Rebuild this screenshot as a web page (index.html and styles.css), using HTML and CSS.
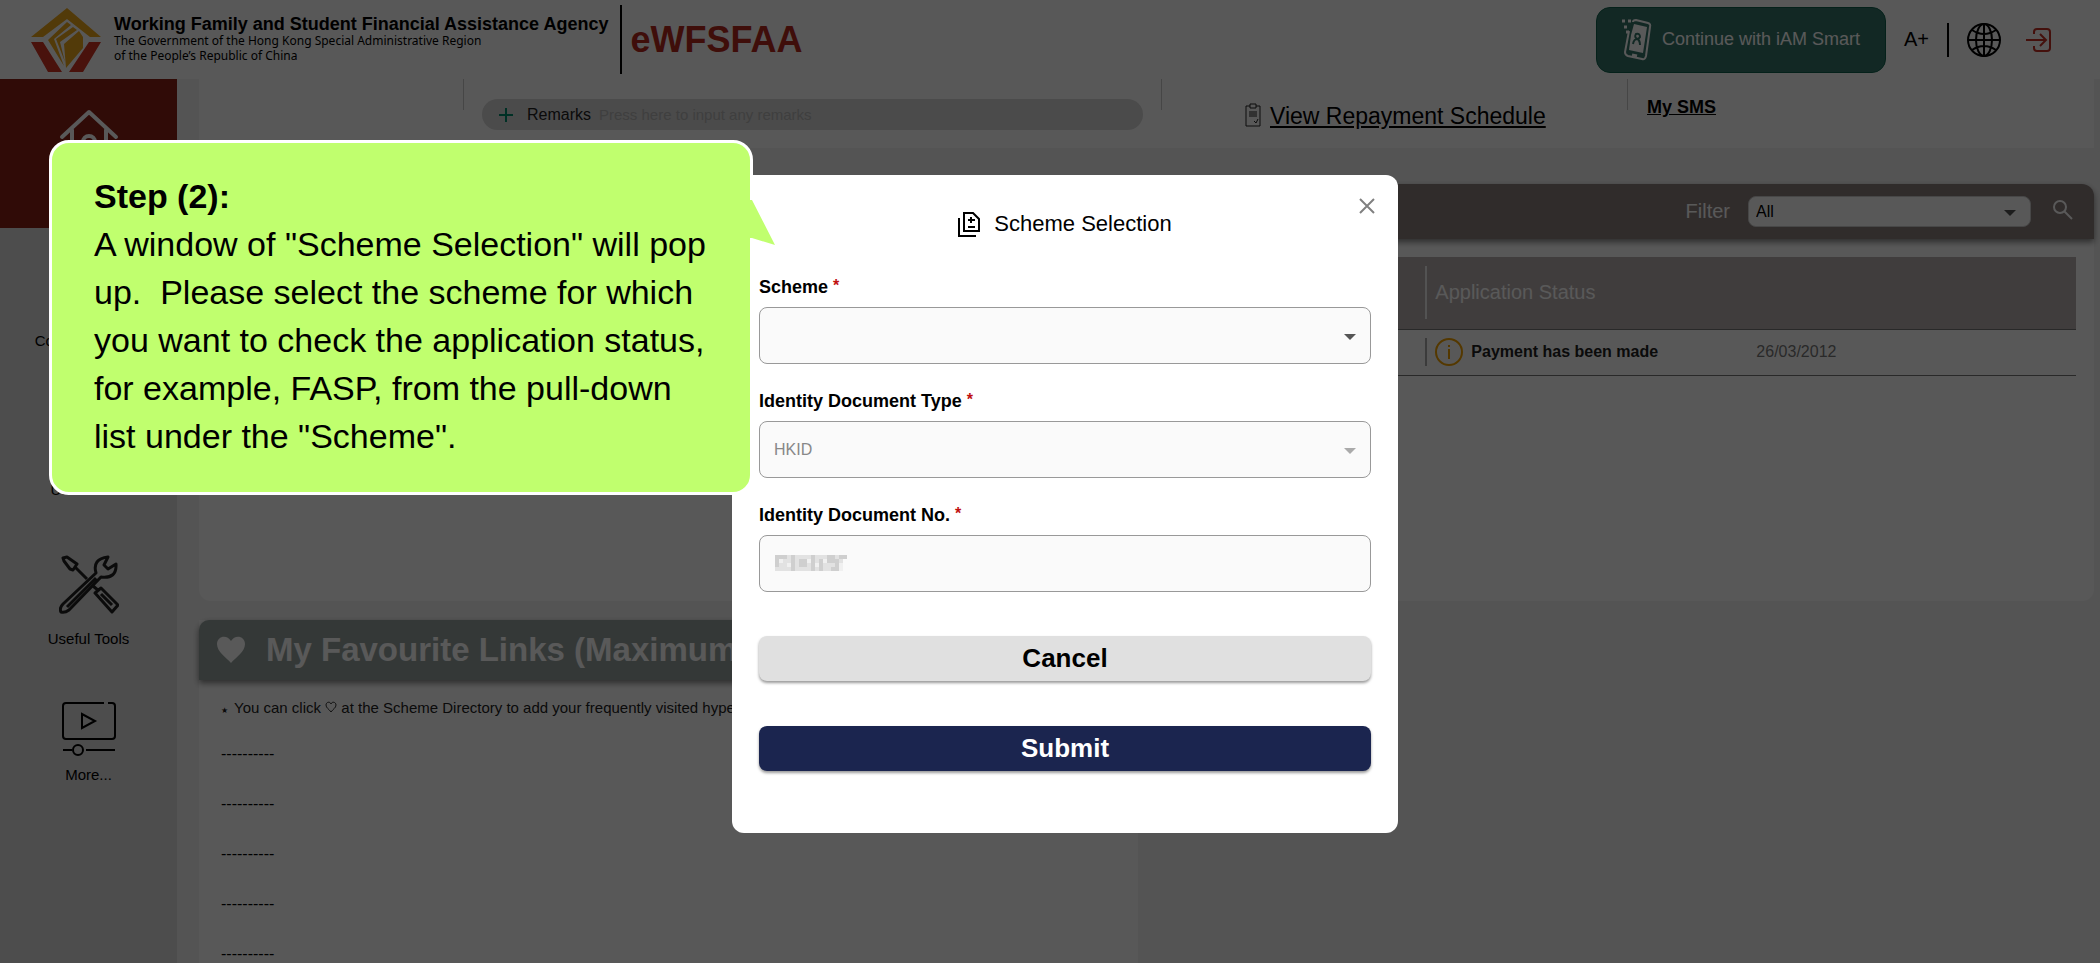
FILE: index.html
```html
<!DOCTYPE html>
<html lang="en">
<head>
  <meta charset="UTF-8">
  <meta name="viewport" content="width=device-width, initial-scale=1.0">
  <title>eWFSFAA</title>
  <link rel="stylesheet" href="styles.css">
</head>
<body>
  <div class="page">
    <header class="header">
      <svg class="logo" viewBox="0 0 72 64">
        <path fill="#eca51c" d="M37 0 L71 29 H60 L37 11 L13 29 H1 Z"/>
        <path fill="#d03424" d="M1 34 H13 L32 64 H18 Z M71 34 H59 L39 64 H53 Z"/>
        <path fill="#eca51c" d="M37 14 L41 17 L24 31 L34 58 L18 32 Z M43 19 L47 22 L30 34 L35 54 L26 31 Z M49 23 L53 29 V40 L36 60 L34 36 Z"/>
      </svg>
      <div class="agency">
        <strong>Working Family and Student Financial Assistance Agency</strong>
        <span>The Government of the Hong Kong Special Administrative Region</span>
        <span>of the People’s Republic of China</span>
      </div>
      <h1 class="brand">eWFSFAA</h1>

      <div class="header-tools">
        <button class="iam-button" type="button">
          <svg width="30" height="42" viewBox="0 0 30 42" fill="none" stroke="#fff" stroke-width="2">
            <path d="M11 3 Q11 1 14 1 L26 4 Q29 5 28 8 L24 37 Q23 41 20 40 L6 37 Q3 36 3 33 L7 12"/>
            <path fill="#fff" stroke="none" d="M12 5 L25 8 L21 34 L7 31 L9 16 Z"/>
            <path stroke="#357469" d="M11 25 Q12 20 15 20 Q18 21 18 26 M15 20 Q12 18 14 15 Q18 14 18 18 Q17 20 15 20"/>
            <path stroke-width="3" d="M0 2 H3 M6 2 H9 M2 8 H5 M4 13 H7 M10 36 L15 37"/>
          </svg>
          Continue with iAM Smart
        </button>
        <button class="plain size-button" type="button">A+</button>
        <button class="plain" type="button" aria-label="Language">
          <svg width="34" height="34" viewBox="0 0 34 34" fill="none" stroke="#000" stroke-width="2">
            <circle cx="17" cy="17" r="16"/>
            <ellipse cx="17" cy="17" rx="8" ry="16"/>
            <path d="M17 1 V33 M1 17 H33 M5 7 Q17 15 29 7 M5 27 Q17 19 29 27"/>
          </svg>
        </button>
        <button class="plain" type="button" aria-label="Logout">
          <svg width="26" height="24" viewBox="0 0 26 24" fill="none" stroke="#c43024" stroke-width="2">
            <path d="M8 6 V4 Q8 1 11 1 H21 Q24 1 24 4 V20 Q24 23 21 23 H11 Q8 23 8 20 V18 M0 12 H19 M14 6 L20 12 L14 18"/>
          </svg>
        </button>
      </div>
    </header>

    <div class="body">
      <nav class="sidebar">
        <a class="side-item home" href="#" aria-label="Home">
          <svg width="60" height="60" viewBox="0 0 60 60" fill="none" stroke="#fff" stroke-width="4" stroke-linecap="round" stroke-linejoin="round">
            <path d="M3 29 L30 4 L57 29 M13 22 V55 H47 V22"/>
            <circle cx="30" cy="34" r="6"/>
          </svg>
        </a>
        <a class="side-item" href="#">
          <svg width="60" height="60" viewBox="0 0 60 60" fill="none" stroke="#222" stroke-width="3"><path d="M12 3 H48 V57 H12 Z M20 18 H40 M20 30 H40"/></svg>
          Common Forms
        </a>
        <a class="side-item" href="#">
          <svg width="60" height="60" viewBox="0 0 60 60" fill="none" stroke="#222" stroke-width="3"><circle cx="30" cy="30" r="26"/><path d="M30 26 V44 M30 16 V20"/></svg>
          User Guide
        </a>
        <a class="side-item" href="#">
          <svg width="60" height="60" viewBox="0 0 60 60" fill="none" stroke="#222" stroke-width="3" stroke-linejoin="round">
            <path d="M4 3 L8 2 L18 9 L14 15 L11 14 L5 6 Z M16 12 L28 24 M34 31 L40 36 M36 38 L42 33 L59 50 L53 57 Z M42 39 L53 50"/>
            <path d="M37 18 Q33 4 49 2 L45 10 L49 14 L57 9 Q58 24 42 22 L10 55 Q6 58 2 57 Q0 53 4 49 Z M8 52 L37 23"/>
          </svg>
          Useful Tools
        </a>
        <a class="side-item more" href="#">
          <svg width="54" height="54" viewBox="0 0 54 54" fill="none" stroke="#000" stroke-width="2">
            <path d="M42 1 H4 Q1 1 1 4 V34 Q1 37 4 37 H50 Q53 37 53 34 V4 Q53 1 50 1 H46 M20 12 V26 L33 19 Z M1 48 H10 M24 48 H53"/>
            <circle cx="16" cy="48" r="5"/>
          </svg>
          More...
        </a>
      </nav>

      <main class="content">
        <section class="summary">
          <div class="cell"></div>
          <div class="cell remarks-cell">
            <div class="remarks">
              <svg width="14" height="14" viewBox="0 0 14 14" stroke="#008a6a" stroke-width="2"><path d="M7 0 V14 M0 7 H14"/></svg>
              <label for="remarks">Remarks</label>
              <input type="text" id="remarks" placeholder="Press here to input any remarks">
            </div>
          </div>
          <div class="cell repay-cell">
            <svg width="16" height="24" viewBox="0 0 16 24" fill="none" stroke="#222"><path d="M5 3 H1 V23 H15 V3 H11 M5 1 H11 V5 H5 Z M4 9 H12 M4 11 H12 M4 13 H12 M9 18 L11 20 L13 16"/></svg>
            <a href="#">View Repayment Schedule</a>
          </div>
          <div class="cell sms-cell"><a href="#">My SMS</a></div>
        </section>

        <section class="applications">
          <div class="bar">
            <label for="filter">Filter</label>
            <div class="select-wrap">
              <select id="filter"><option>All</option></select>
            </div>
            <button class="plain search" type="button" aria-label="Search">
              <svg width="22" height="26" viewBox="0 0 22 26" fill="none" stroke="#fff" stroke-width="2"><circle cx="8" cy="8" r="6"/><path d="M12 12 L20 20"/></svg>
            </button>
          </div>
          <table>
            <colgroup>
              <col class="col-scheme">
              <col class="col-status">
              <col>
            </colgroup>
            <thead>
              <tr>
                <th></th>
                <th colspan="2"><div class="divided">Application Status</div></th>
              </tr>
            </thead>
            <tbody>
              <tr>
                <td></td>
                <td>
                  <div class="divided">
                    <svg width="28" height="28" viewBox="0 0 28 28" fill="none" stroke="#f0a000" stroke-width="2"><circle cx="14" cy="14" r="13"/><path d="M14 11 V21 M14 7 V9"/></svg>
                    <strong>Payment has been made</strong>
                  </div>
                </td>
                <td class="date">26/03/2012</td>
              </tr>
            </tbody>
          </table>
        </section>

        <section class="favourites">
          <h2>
            <svg width="30" height="28" viewBox="0 0 30 28"><path fill="#fff" d="M15 27 C10 21 1 16 1 8 C1 0 11 -2 15 5 C19 -2 29 0 29 8 C29 16 20 21 15 27 Z"/></svg>
            My Favourite Links (Maximum
          </h2>
          <p class="note"><span class="star">★</span>You can click
            <svg width="12" height="12" viewBox="0 0 12 12"><path fill="none" stroke="#333" d="M6 11 C4 8 1 7 1 4 C1 1 5 0 6 3 C7 0 11 1 11 4 C11 7 8 8 6 11 Z"/></svg>
            at the Scheme Directory to add your frequently visited hyperlinks</p>
          <ul>
            <li>----------</li>
            <li>----------</li>
            <li>----------</li>
            <li>----------</li>
            <li>----------</li>
          </ul>
        </section>
      </main>
    </div>
  </div>

  <div class="overlay">
    <form class="modal">
      <button class="plain close" type="button" aria-label="Close">
        <svg width="16" height="16" viewBox="0 0 16 16" stroke="#808080" stroke-width="2"><path d="M1 1 L15 15 M15 1 L1 15"/></svg>
      </button>
      <h2 class="modal-title">
        <svg width="22" height="26" viewBox="0 0 22 26" fill="none" stroke="#000" stroke-width="2">
          <path d="M6 2 H15 L21 8 V20 H6 Z M1 7 V25 H18 M10 9 H17 M13 6 V12 M10 16 H17"/>
        </svg>
        Scheme Selection
      </h2>

      <div class="field">
        <label for="scheme">Scheme <sup>*</sup></label>
        <div class="select-wrap">
          <select id="scheme"><option></option></select>
        </div>
      </div>

      <div class="field">
        <label for="docType">Identity Document Type <sup>*</sup></label>
        <div class="select-wrap disabled">
          <select id="docType" disabled><option>HKID</option></select>
        </div>
      </div>

      <div class="field">
        <label for="docNo">Identity Document No. <sup>*</sup></label>
        <div class="masked">
          <input type="text" id="docNo" disabled>
          <svg width="72" height="16" viewBox="0 0 72 16" shape-rendering="crispEdges">
            <path fill="#e2e2e2" d="M0 0 H68 V16 H0 Z"/>
            <path fill="#cfcfcf" d="M0 0 H12 V4 H4 V12 H0 Z M16 0 H20 V16 H16 Z M24 4 H32 V12 H24 Z M36 0 H40 V16 H36 Z M44 4 H48 V16 H44 Z M52 0 H60 V8 H52 Z M60 4 H64 V16 H56 V12 H60 Z M64 0 H72 V4 H64 Z"/>
            <path fill="#f0f0f0" d="M4 4 H8 V8 H4 Z M12 8 H16 V12 H12 Z M32 4 H36 V8 H32 Z M40 8 H44 V12 H40 Z M48 4 H52 V8 H48 Z M64 8 H68 V16 H64 Z"/>
          </svg>
        </div>
      </div>

      <div class="actions">
        <button class="cancel" type="button">Cancel</button>
        <button class="submit" type="button">Submit</button>
      </div>
    </form>

    <div class="callout">
      <strong>Step (2):</strong>
      <p>A window of "Scheme Selection" will pop up.&nbsp; Please select the scheme for which you want to check the application status, for example, FASP, from the pull-down list under the "Scheme".</p>
      <svg class="tail" width="26" height="46" viewBox="0 0 26 46"><path fill="#c0ff6e" d="M0 0 H3 L26 45 L3 38 H0 Z"/></svg>
    </div>
  </div>
</body>
</html>
```

FILE: styles.css
```css
* {
  box-sizing: border-box;
}

body {
  margin: 0;
  font-family: "Liberation Sans", Arial, sans-serif;
  font-size: 16px;
  color: #000;
}

h1, h2, p, ul {
  margin: 0;
  padding: 0;
}

a {
  color: inherit;
}

button, input, select {
  font-family: inherit;
  font-size: 16px;
}

svg {
  flex-shrink: 0;
}

.plain {
  display: flex;
  padding: 0;
  border: none;
  background: none;
}

.page {
  display: flex;
  flex-direction: column;
  height: 100vh;
  overflow: hidden;
  background: #f1f1f1;
}

/* header */
.header {
  display: flex;
  align-items: center;
  flex-shrink: 0;
  height: 79px;
  padding: 0 48px 0 30px;
  background: #fdfdfd;
}

.logo {
  width: 72px;
  height: 64px;
}

.agency {
  display: flex;
  flex-direction: column;
  margin: 0 12px;
  padding-bottom: 2px;
  font-family: "Noto Sans", sans-serif;
  font-size: 12px;
  line-height: 15px;
  white-space: nowrap;
}

.agency strong {
  font-family: "Liberation Sans", Arial, sans-serif;
  font-size: 18px;
  line-height: 18px;
}

.brand {
  padding-left: 8px;
  border-left: 2px solid #000;
  font-size: 36px;
  line-height: 69px;
  color: #b42a1e;
}

.header-tools {
  display: flex;
  align-items: center;
  margin-left: auto;
}

.header-tools .plain + .plain {
  margin-left: 18px;
}

.header-tools .plain:last-child {
  margin-left: 25px;
}

.iam-button {
  display: flex;
  align-items: center;
  gap: 10px;
  height: 66px;
  margin-right: 18px;
  padding: 0 25px;
  border: 1px solid #10604c;
  border-radius: 14px;
  background: #357469;
  color: #fff;
  font-size: 18px;
}

.header-tools .size-button {
  align-items: center;
  height: 34px;
  padding-right: 18px;
  border-right: 2px solid #000;
  font-size: 20px;
}

/* sidebar */
.body {
  display: flex;
  flex: 1;
  min-height: 0;
}

.sidebar {
  flex: 0 0 177px;
  background: #dcdcdc;
}

.side-item {
  display: flex;
  flex-direction: column;
  align-items: center;
  gap: 14px;
  height: 149px;
  padding-top: 29px;
  font-size: 15px;
  line-height: 20px;
  text-decoration: none;
}

.side-item.home {
  background: #8b2016;
}

.side-item.more {
  gap: 9px;
  padding-top: 27px;
}

/* content */
.content {
  flex: 1;
  min-width: 0;
  padding: 0 6px 0 22px;
}

.summary {
  display: grid;
  grid-template-columns: 264fr 698fr 466fr 467fr;
  height: 69px;
  margin-bottom: 36px;
  background: #fdfdfd;
}

.cell {
  height: 31px;
}

.cell + .cell {
  border-left: 1px solid #c8c8c8;
}

.remarks-cell {
  padding: 20px 18px 0;
}

.remarks {
  display: flex;
  align-items: center;
  gap: 8px;
  height: 31px;
  padding: 0 17px;
  border-radius: 16px;
  background: #d6d6d6;
}

.remarks label {
  margin-left: 6px;
  color: #222;
}

.remarks input {
  flex: 1;
  padding: 0;
  border: none;
  background: none;
  font-size: 15px;
}

.remarks input::placeholder {
  color: #b4b4b4;
}

.repay-cell {
  display: flex;
  gap: 9px;
  padding: 24px 0 0 83px;
  font-size: 23px;
  line-height: 26px;
  white-space: nowrap;
}

.sms-cell {
  padding: 17px 0 0 19px;
  font-size: 18px;
  font-weight: bold;
  line-height: 22px;
}

.applications {
  height: 417px;
  margin-bottom: 19px;
  border-radius: 12px;
  background: #fdfdfd;
}

.bar {
  display: flex;
  align-items: center;
  justify-content: flex-end;
  height: 55px;
  padding-right: 20px;
  border-radius: 12px 12px 0 0;
  background: #8a7e7c;
  box-shadow: 0 3px 6px rgba(0, 0, 0, 0.5);
  color: #fff;
  font-size: 20px;
}

.bar .select-wrap {
  width: 283px;
  margin: 0 21px 0 18px;
}

.select-wrap {
  position: relative;
}

.select-wrap::after {
  content: "";
  position: absolute;
  top: 50%;
  right: 15px;
  margin-top: -2px;
  border: 6px solid transparent;
  border-top-color: #555;
  border-bottom: none;
}

.select-wrap.disabled::after {
  border-top-color: #aaa;
}

select {
  display: block;
  width: 100%;
  appearance: none;
}

.bar select {
  height: 31px;
  padding: 0 7px;
  border: 1px solid #ccc;
  border-radius: 8px;
  background: #fdfdfd;
  color: #000;
}

table {
  width: calc(100% - 36px);
  margin: 18px;
  border-collapse: collapse;
  table-layout: fixed;
}

.col-scheme {
  width: 65%;
}

.col-status {
  width: 331px;
}

th, td {
  padding: 0;
  border-bottom: 1px solid #777;
  text-align: left;
}

th {
  height: 72px;
  background: #b7aeae;
  color: #fff;
  font-size: 20px;
  font-weight: normal;
}

td {
  height: 46px;
}

.divided {
  display: flex;
  align-items: center;
  gap: 8px;
  padding-left: 8px;
  border-left: 2px solid #aaa;
  color: #222;
}

th .divided {
  height: 53px;
  border-color: #eee;
  color: #fff;
}

.date {
  color: #777;
}

.favourites {
  width: 939px;
  height: 500px;
  background: #fdfdfd;
}

.favourites h2 {
  display: flex;
  align-items: center;
  gap: 20px;
  height: 60px;
  padding-left: 17px;
  border-radius: 10px 10px 0 0;
  background: #95a19e;
  box-shadow: 0 3px 6px rgba(0, 0, 0, 0.5);
  color: #fff;
  font-size: 33px;
}

.note {
  padding: 18px 22px 0;
  color: #222;
  font-size: 15px;
  line-height: 20px;
}

.star {
  margin-right: 6px;
  font-size: 8px;
}

.favourites ul {
  padding: 8px 22px;
  list-style: none;
}

.favourites li {
  line-height: 50px;
}

/* scheme selection window */
.overlay {
  position: fixed;
  inset: 0;
  display: flex;
  align-items: flex-start;
  justify-content: center;
  padding: 175px 0 0 30px;
  background: rgba(0, 0, 0, 0.65);
}

.modal {
  position: relative;
  width: 666px;
  padding: 31px 27px 62px;
  border-radius: 12px;
  background: #fff;
}

.close {
  position: absolute;
  top: 23px;
  right: 23px;
}

.modal-title {
  display: flex;
  align-items: center;
  justify-content: center;
  gap: 14px;
  margin-bottom: 35px;
  font-size: 22px;
  font-weight: normal;
  line-height: 36px;
}

.field {
  margin-bottom: 27px;
}

.field label {
  display: block;
  height: 20px;
  margin-bottom: 10px;
  font-size: 18px;
  font-weight: bold;
  line-height: 20px;
}

.field sup {
  font-size: 16px;
  line-height: 0;
  vertical-align: 2px;
  color: #c01010;
}

.field select,
.field input {
  display: block;
  width: 100%;
  height: 57px;
  padding: 0 14px;
  border: 1px solid #999;
  border-radius: 8px;
  background: #fafafa;
  color: #888;
  opacity: 1;
}

.masked {
  position: relative;
}

.masked svg {
  position: absolute;
  top: 20px;
  left: 16px;
}

.actions {
  display: grid;
  gap: 45px;
  margin-top: 44px;
}

.actions button {
  height: 45px;
  border: none;
  border-radius: 8px;
  box-shadow: 0 2px 3px rgba(0, 0, 0, 0.4);
  font-size: 26px;
  font-weight: bold;
}

.cancel {
  background: #e0e0e0;
  color: #000;
}

.submit {
  background: #1b254f;
  color: #fff;
}

/* step bubble */
.callout {
  position: absolute;
  top: 140px;
  left: 49px;
  width: 704px;
  padding: 29px 34px 32px 42px;
  border: 3px solid #fff;
  border-radius: 20px;
  background: #c0ff6e;
  font-size: 34px;
  line-height: 48px;
}

.tail {
  position: absolute;
  top: 57px;
  right: -25px;
}
```
